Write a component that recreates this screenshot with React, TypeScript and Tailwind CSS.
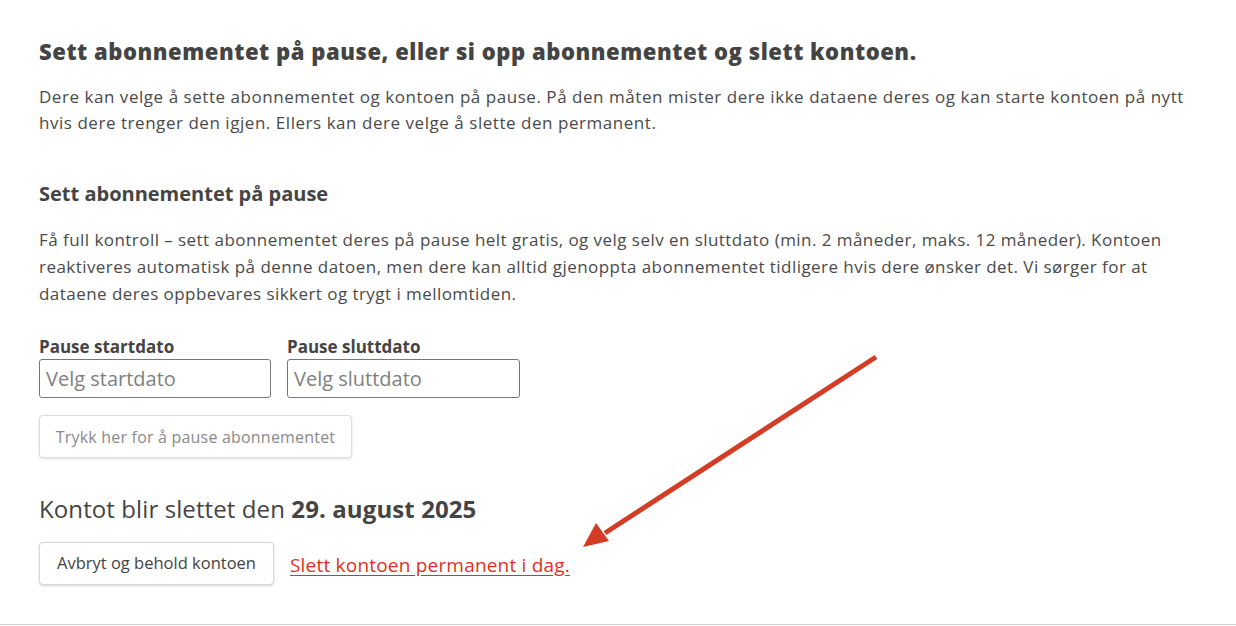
const font = { fontFamily: '"Open Sans", sans-serif' };

function Arrow() {
  return (
    <svg className="absolute left-0 top-0 pointer-events-none" width="1236" height="626" viewBox="0 0 1236 626">
      <line x1="876" y1="357" x2="605" y2="533" stroke="#d43d25" strokeWidth="5" />
      <polygon points="583,547 596,523 609,541" fill="#d43d25" />
    </svg>
  );
}

export default function App() {
  return (
    <div className="relative w-[1236px] h-[626px] bg-white overflow-hidden" style={font}>
      <div className="h-[625px] border-b border-[#cfcfcf] pl-[39px] pt-[36px] text-[#444]">
        <h1 className="text-[22px] font-extrabold leading-[30px] tracking-[0.55px]">
          Sett abonnementet på pause, eller si opp abonnementet og slett kontoen.
        </h1>
        <p className="mt-[18px] text-[17px] leading-[26px] tracking-[0.54px] text-[#4a4a4a]">
          Dere kan velge å sette abonnementet og kontoen på pause. På den måten mister dere ikke dataene deres og kan starte kontoen på nytt
          <br />
          hvis dere trenger den igjen. Ellers kan dere velge å slette den permanent.
        </p>

        <h2 className="mt-[44px] text-[20px] font-bold leading-[28px]">Sett abonnementet på pause</h2>
        <p className="mt-[18px] text-[17px] leading-[27px] tracking-[0.45px] text-[#4a4a4a]">
          Få full kontroll – sett abonnementet deres på pause helt gratis, og velg selv en sluttdato (min. 2 måneder, maks. 12 måneder). Kontoen
          <br />
          reaktiveres automatisk på denne datoen, men dere kan alltid gjenoppta abonnementet tidligere hvis dere ønsker det. Vi sørger for at
          <br />
          dataene deres oppbevares sikkert og trygt i mellomtiden.
        </p>

        <div className="mt-[29px] flex gap-[16px]">
          <label className="flex flex-col">
            <span className="text-[17px] font-bold leading-[22px]">Pause startdato</span>
            <input
              placeholder="Velg startdato"
              className="mt-[1px] w-[232px] h-[39px] rounded-[3px] border border-[#777] px-[6px] text-[20px] placeholder:text-[#808080] outline-none"
              style={font}
            />
          </label>
          <label className="flex flex-col">
            <span className="text-[17px] font-bold leading-[22px]">Pause sluttdato</span>
            <input
              placeholder="Velg sluttdato"
              className="mt-[1px] w-[233px] h-[39px] rounded-[3px] border border-[#777] px-[6px] text-[20px] placeholder:text-[#808080] outline-none"
              style={font}
            />
          </label>
        </div>

        <button className="mt-[17px] h-[43px] w-[313px] rounded-[4px] border border-[#ddd] bg-white text-[16px] tracking-[0.2px] text-[#8a8a8a] shadow-[0_1px_3px_rgba(0,0,0,0.12)]">
          Trykk her for å pause abonnementet
        </button>

        <p className="mt-[35px] text-[24px] leading-[32px] tracking-[0.1px] text-[#444]">
          Kontot blir slettet den <span className="font-bold">29. august 2025</span>
        </p>

        <div className="mt-[17px] flex items-center gap-[16px]">
          <button className="h-[43px] w-[235px] rounded-[4px] border border-[#d6d6d6] bg-white text-[16.5px] text-[#444] shadow-[0_1px_3px_rgba(0,0,0,0.15)]">
            Avbryt og behold kontoen
          </button>
          <a href="#" className="mt-[3px] text-[19px] tracking-[0.2px] text-[#e0301e] underline underline-offset-[3px]">
            Slett kontoen permanent i dag.
          </a>
        </div>
      </div>
      <Arrow />
    </div>
  );
}
